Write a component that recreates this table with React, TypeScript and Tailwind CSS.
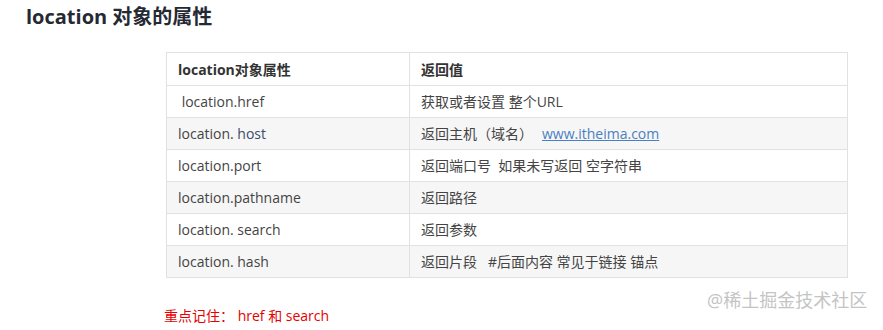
const rows: [React.ReactNode, React.ReactNode][] = [
  [' location.href', '获取或者设置 整个URL'],
  [
    <>
      location. <span className="text-[#3c4a6b]">host</span>
    </>,
    <>
      返回主机（域名）
      <a className="ml-[9px] text-[#4a7fc1] underline" href="#">
        www.itheima.com
      </a>
    </>,
  ],
  ['location.port', '返回端口号\u00a0\u00a0如果未写返回 空字符串'],
  ['location.pathname', '返回路径'],
  ['location. search', '返回参数'],
  ['location. hash', '返回片段\u00a0\u00a0 #后面内容 常见于链接 锚点'],
]

const App = () => {
  return (
    <div className="relative h-[330px] w-[883px] bg-white font-['Open_Sans','Noto_Sans_CJK_SC',sans-serif] text-[#333]">
      <h2 className="pl-[26px] pt-[5px] text-[20px] font-bold leading-[24px] text-[#252933]">
        location 对象的属性
      </h2>
      <div className="ml-[166px] mt-[23px] w-[682px]">
        <table className="w-full border-collapse text-[14px]">
          <thead>
            <tr className="h-[33px]">
              <th className="w-[243px] border border-[#dfe2e5] px-[11px] text-left font-bold">
                location对象属性
              </th>
              <th className="border border-[#dfe2e5] px-[11px] text-left font-bold">
                返回值
              </th>
            </tr>
          </thead>
          <tbody>
            {rows.map(([k, v], i) => (
              <tr
                key={i}
                className={i % 2 === 1 ? 'h-[32px] bg-[#f6f6f6]' : 'h-[32px] bg-white'}
              >
                <td className="whitespace-pre border border-[#dfe2e5] px-[11px] text-[#444]">
                  {k}
                </td>
                <td className="border border-[#dfe2e5] px-[11px] text-[#444]">{v}</td>
              </tr>
            ))}
          </tbody>
        </table>
      </div>
      <p className="ml-[164px] mt-[27px] text-[14px] text-[#e60000]">
        重点记住：&nbsp;href 和 search
      </p>
      <span className="absolute left-[707px] top-[287px] text-[18px] text-[#c4c4c4]">
        @稀土掘金技术社区
      </span>
    </div>
  )
}

export default App
